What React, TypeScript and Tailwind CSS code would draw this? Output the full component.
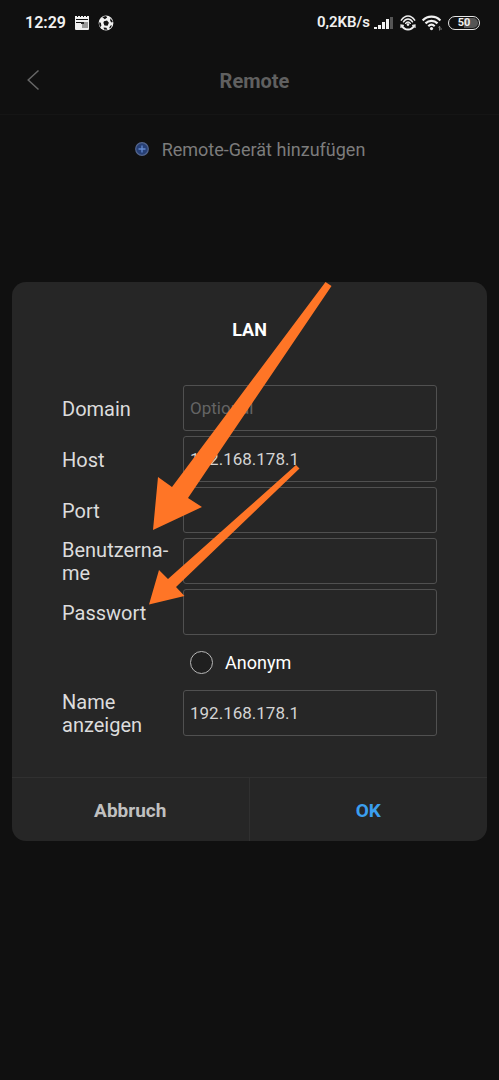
import React, { useState } from 'react';
import clsx from 'clsx';

interface FieldProps {
  id: string;
  label: React.ReactNode;
  value: string;
  placeholder?: string;
  type?: string;
  onChange: (value: string) => void;
}

function Field({ id, label, value, placeholder, type = 'text', onChange }: FieldProps) {
  return (
    <div className="flex h-[46px] items-center">
      <label htmlFor={id} className="w-[121px] shrink-0 pt-0.5 text-[20px] leading-[23px] text-[#dcdcdc]">
        {label}
      </label>
      <input
        id={id}
        type={type}
        value={value}
        placeholder={placeholder}
        onChange={(e) => onChange(e.target.value)}
        className="h-full w-full min-w-0 rounded-[3px] border border-[#505050] bg-transparent px-1.5 text-[17px] text-[#d4d4d4] outline-none placeholder:text-[#646464] focus:border-[#3b9ff0]"
      />
    </div>
  );
}

function StatusBar() {
  return (
    <div className="flex h-[45px] items-center justify-between pr-[19px] pl-[25px] text-[#f0f0f0]">
      <div className="flex items-center gap-2">
        <span className="text-[16px] font-semibold">12:29</span>
        <svg className="h-4 w-4" viewBox="0 0 16 16">
          <path d="M1 1h2v1h1V1h2v1h1V1h2v1h1V1h2v1h1V1h2v13a1 1 0 0 1-1 1H2a1 1 0 0 1-1-1V1z" fill="#f0f0f0" />
          <path d="M2 4h12v1H2zM2 7h5v1H2z" fill="#111111" />
          <path d="M8 7h6v6H8z" fill="#999999" />
          <path d="M7 7h3v2H7z" fill="#222222" />
        </svg>
        <svg className="h-4 w-4" viewBox="0 0 16 16">
          <circle cx="8" cy="8" r="7.4" fill="#f0f0f0" />
          <path d="M6 6.300 9 5.600l1.900 2.200-1.300 2.900-3.200-.3-1-2.600zM4.200 1.900 8 1l1.200 1.600-2.400 1.600zM12.300 3.200l2.500 3-.8 1.600-1.800-1.800zM1.200 7.200l1.600.6.600 2.900-1.200 1.200A7 7 0 0 1 1.200 7.200zM5.600 12.400l2.800.3 1 2.100-3.400-.2zM12.200 10.800l1.900-.5-1.900 3.200-1-.4z" fill="#111111" />
        </svg>
      </div>
      <div className="flex items-center">
        <span className="text-[15px] font-semibold">0,2KB/s</span>
        <svg className="ml-1 h-[14px] w-5" viewBox="0 0 20 14">
          <path d="M0 11h3v2H0zM4 9h3v4H4zM8 6h3v7H8zM12 3h3v10h-3z" fill="#f0f0f0" />
          <path d="M16 1h3v12h-3z" fill="#555555" />
        </svg>
        <svg className="ml-1.5 h-4 w-4" viewBox="0 0 16 16" fill="none" stroke="#f0f0f0" strokeWidth="1.500" strokeLinecap="round">
          <path d="M1.300 5.200C5-.4 11-.4 14.700 5.200M3.500 6.800c2.400-3.900 6.600-3.900 9 0M5.700 8.300c1.300-1.900 3.300-1.900 4.600 0" />
          <circle cx="8" cy="9.600" r="1.300" fill="#f0f0f0" stroke="none" />
          <path d="M2 11c2.800 4.800 9.200 4.800 12 0" strokeWidth="2" />
          <path d="M1 12.400V10l2.400.3M15 12.400V10l-2.400.3" strokeWidth="1.200" />
        </svg>
        <svg className="ml-1.5 h-4 w-5" viewBox="0 0 20 16" fill="none" stroke="#f0f0f0" strokeWidth="2.200">
          <path d="M.6 5.400c4.900-5 12.900-5 17.800 0M3.500 8.400c3.400-3.400 8.600-3.400 12 0M6.300 11.200c1.900-1.800 4.500-1.800 6.400 0" />
          <circle cx="9.500" cy="13.600" r="1.600" fill="#f0f0f0" stroke="none" />
          <path d="M17.500 15.500v-4M16.500 12.500l1-1.200 1 1.200M19 13v2" stroke="#999999" strokeWidth=".8" />
        </svg>
        <div className="ml-1.5 flex h-[14px] w-8 rounded-full border border-[#e6e6e6] p-px">
          <span className="flex flex-1 items-center justify-center rounded-full bg-linear-to-r from-[#111111] from-50% to-[#555555] to-50% text-[11px] leading-none font-bold">
            50
          </span>
        </div>
      </div>
    </div>
  );
}

// Markers pointing at the user name and password rows
function Arrows() {
  return (
    <svg className="pointer-events-none absolute top-0 left-0 h-[340px] w-[340px]" viewBox="12 282 340 340" fill="#ff7526" aria-hidden="true">
      <path d="M325.500 282l6 4L188 498l14 9-49 23 5-53 14 10z" />
      <path d="M296 465l3.500 3.500L176 587l8.500 9-35.500 8.500L159 570l9 9z" />
    </svg>
  );
}

export default function App() {
  const [form, setForm] = useState({
    domain: '',
    host: '192.168.178.1',
    port: '',
    user: '',
    password: '',
    name: '192.168.178.1',
  });
  const [anonymous, setAnonymous] = useState(false);

  const update = (key: keyof typeof form) => (value: string) => {
    setForm((prev) => ({ ...prev, [key]: value }));
  };

  return (
    <div className="min-h-screen bg-[#101010] font-['Roboto',sans-serif]">
      <StatusBar />

      <header className="flex h-[70px] items-center border-b border-[#151515] pr-4 pl-[26px]">
        <button type="button" aria-label="Zurück" className="flex w-4 justify-start">
          <svg className="h-[22px] w-[14px]" viewBox="0 0 14 22" fill="none" stroke="#666666" strokeWidth="1.500">
            <path d="M12.500 1.500 2.200 11l10.300 9.500" />
          </svg>
        </button>
        <h1 className="flex-1 pt-0.5 pr-4 text-center text-[20px] font-bold text-[#606060]">Remote</h1>
      </header>

      <div className="flex h-[68px] items-center justify-center">
        <button type="button" className="flex items-center gap-3 text-[18px] text-[#7c7c7c]">
          <svg className="h-4 w-4" viewBox="0 0 16 16">
            <circle cx="8" cy="8" r="6.300" fill="#263f75" stroke="#53658d" strokeWidth="1.200" />
            <path d="M8 4.500v7M4.500 8h7" stroke="#648bd0" strokeWidth="1.300" />
          </svg>
          Remote-Gerät hinzufügen
        </button>
      </div>

      <div role="dialog" aria-labelledby="dialog-title" className="relative mx-3 mt-[99px] rounded-[14px] bg-[#262626]">
        <h2 id="dialog-title" className="pt-9 text-center text-[18px] leading-6 font-bold text-white">
          LAN
        </h2>

        <form className="flex flex-col gap-[5px] px-[50px] pt-[43px] pb-[41px]">
          <Field id="domain" label="Domain" value={form.domain} placeholder="Optional" onChange={update('domain')} />
          <Field id="host" label="Host" value={form.host} onChange={update('host')} />
          <Field id="port" label="Port" value={form.port} onChange={update('port')} />
          <Field id="user" label={<>Benutzerna-<br />me</>} value={form.user} onChange={update('user')} />
          <Field id="password" label="Passwort" type="password" value={form.password} onChange={update('password')} />
          <label className="flex h-[45px] items-center gap-3 pl-32 text-[18px] text-white">
            <input
              type="checkbox"
              checked={anonymous}
              onChange={(e) => setAnonymous(e.target.checked)}
              className={clsx(
                'h-[23px] w-[23px] appearance-none rounded-full border border-[#b8b8b8]',
                anonymous ? 'bg-[#3b9ff0]' : 'bg-[#1f1f1f]'
              )}
            />
            Anonym
          </label>
          <Field id="name" label={<>Name<br />anzeigen</>} value={form.name} onChange={update('name')} />
        </form>

        <div className="grid grid-cols-2 border-t border-[#303030] text-[19px] font-bold">
          <button type="button" className="h-[63px] border-r border-[#303030] pt-1 text-[#c0c0c0]">
            Abbruch
          </button>
          <button type="button" className="h-[63px] pt-1 text-[#3b9ff0]">
            OK
          </button>
        </div>

        <Arrows />
      </div>
    </div>
  );
}
